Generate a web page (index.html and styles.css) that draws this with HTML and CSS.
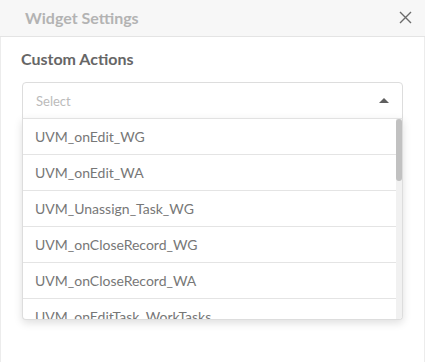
FILE: index.html
```html
<!DOCTYPE html>
<html>
<head>
<meta charset="utf-8">
<link rel="stylesheet" href="styles.css">
</head>
<body>
<div class="panel">
  <div class="header">
    <span class="title">Widget Settings</span>
    <svg class="close" width="13" height="13" viewBox="0 0 13 13"><path d="M1 1 L12 12 M12 1 L1 12" stroke="#6b6b6b" stroke-width="1.4" fill="none"/></svg>
  </div>
  <div class="content">
    <div class="label">Custom Actions</div>
    <div class="select-wrap">
      <div class="select">
        <span class="placeholder">Select</span>
        <span class="caret"></span>
      </div>
      <div class="menu">
        <ul class="options">
          <li>UVM_onEdit_WG</li>
          <li>UVM_onEdit_WA</li>
          <li>UVM_Unassign_Task_WG</li>
          <li>UVM_onCloseRecord_WG</li>
          <li>UVM_onCloseRecord_WA</li>
          <li>UVM_onEditTask_WorkTasks</li>
        </ul>
        <div class="scrollbar"><div class="thumb"></div></div>
      </div>
    </div>
  </div>
</div>
</body>
</html>
```
FILE: styles.css
```css
html, body {
  margin: 0;
  padding: 0;
  background: #ffffff;
}
body {
  font-family: Lato, "Open Sans", sans-serif;
}
.panel {
  width: 425px;
  height: 362px;
  display: flex;
  flex-direction: column;
  box-sizing: border-box;
}
.header {
  height: 37px;
  flex: none;
  background: #f7f7f7;
  border-bottom: 1px solid #e4e4e4;
  display: flex;
  align-items: center;
  justify-content: space-between;
  padding: 0 13px 0 25px;
  box-sizing: border-box;
}
.title {
  font-size: 16px;
  font-weight: 700;
  color: #b3b3b3;
  margin-top: -1px;
}
.close {
  display: block;
  margin-top: -1px;
}
.content {
  flex: 1;
  border-left: 1px solid #ececec;
  border-right: 1px solid #ececec;
  padding: 12px 21px 0 21px;
}
.label {
  font-size: 16px;
  font-weight: 700;
  color: #666666;
  line-height: 20px;
  margin-left: -1px;
}
.select-wrap {
  position: relative;
  margin-top: 13px;
}
.select {
  height: 37px;
  box-sizing: border-box;
  border: 1px solid #dddddd;
  border-radius: 4px 4px 0 0;
  display: flex;
  align-items: center;
  justify-content: space-between;
  padding: 0 13px 0 13px;
}
.placeholder {
  font-size: 13px;
  color: #bbbbbb;
}
.caret {
  width: 0;
  height: 0;
  border-left: 5px solid transparent;
  border-right: 5px solid transparent;
  border-bottom: 5px solid #5f5f5f;
  margin-top: -1px;
}
.menu {
  position: absolute;
  left: 0;
  right: 0;
  top: 36px;
  height: 202px;
  display: flex;
  overflow: hidden;
  background: #ffffff;
  border: 1px solid #dddddd;
  border-top: 1px solid #e2e2e2;
  border-radius: 0 0 4px 4px;
  box-shadow: 0 3px 8px rgba(0, 0, 0, 0.13);
  box-sizing: border-box;
}
.options {
  flex: 1;
  margin: 0;
  padding: 0;
  list-style: none;
  overflow: hidden;
}
.options li {
  height: 36px;
  box-sizing: border-box;
  border-bottom: 1px solid #e4e4e4;
  display: flex;
  align-items: center;
  padding-left: 12px;
  font-size: 14px;
  color: #777777;
}
.options li:last-child {
  border-bottom: none;
  align-items: flex-start;
  padding-top: 9px;
}
.scrollbar {
  width: 6px;
  flex: none;
  background: #f1f1f1;
}
.thumb {
  height: 62px;
  background: #c1c1c1;
  border-radius: 3px;
}
```
